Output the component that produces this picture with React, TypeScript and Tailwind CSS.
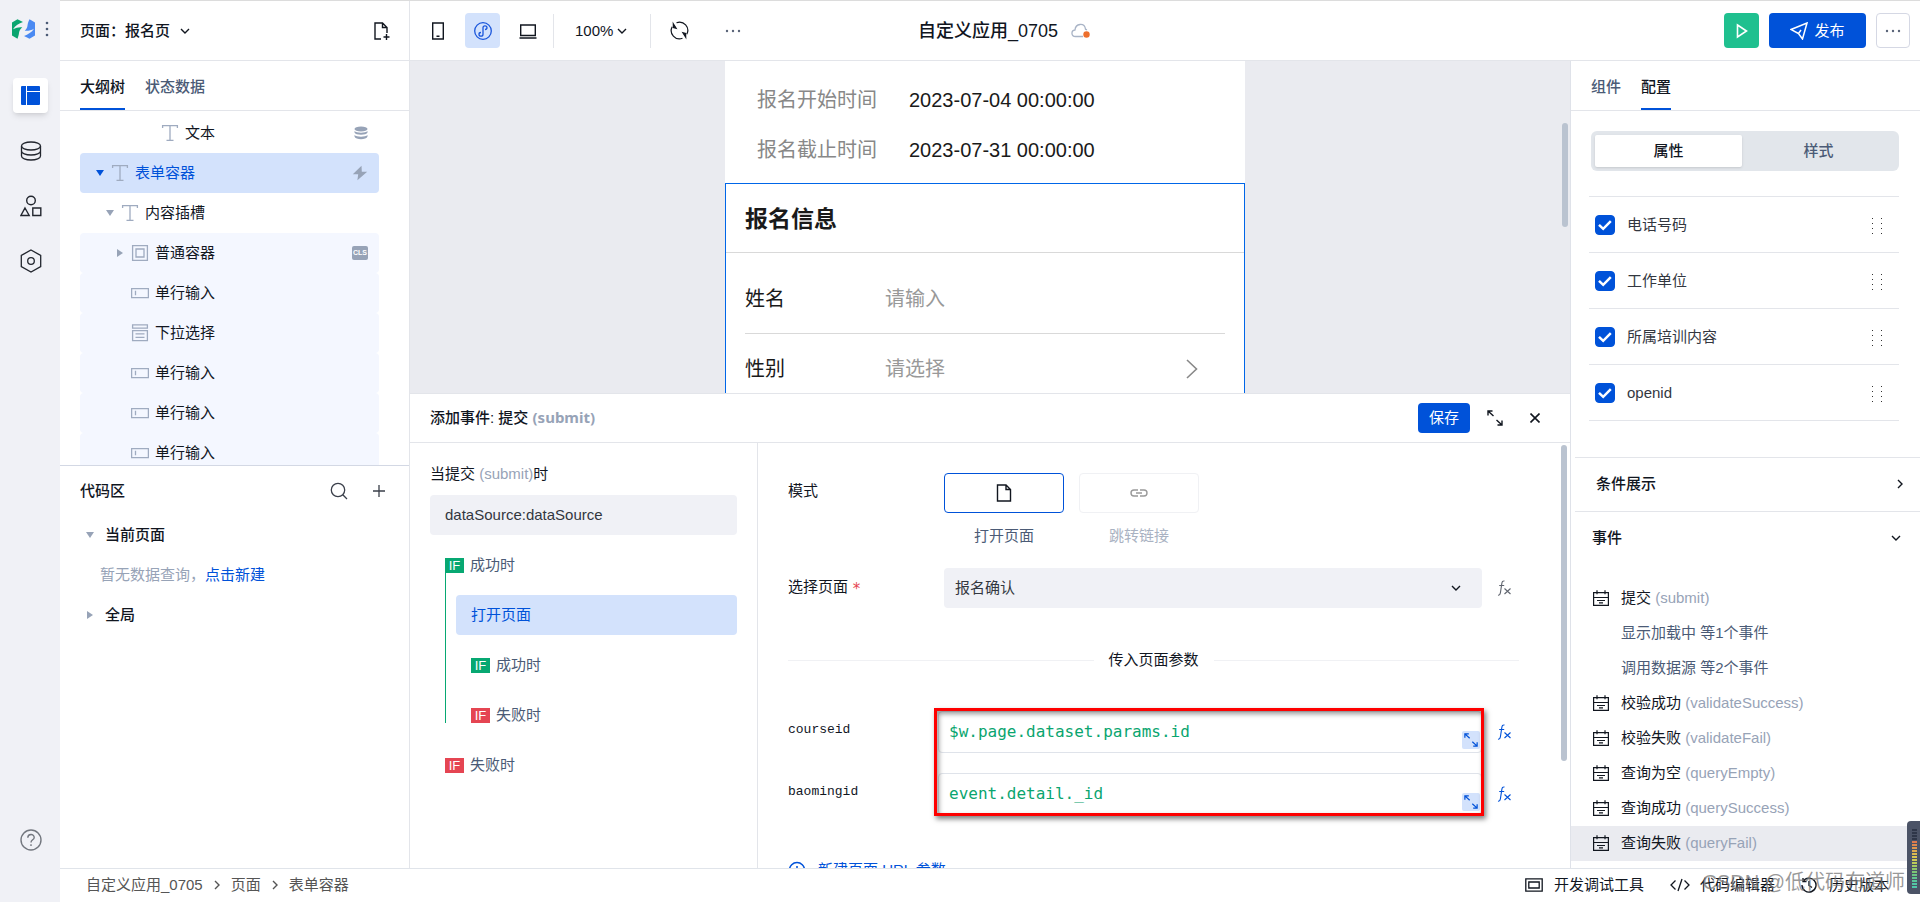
import React, { useState } from 'react'

interface TreeNode {
  label: string
  icon: 'text' | 'box' | 'input' | 'select'
  indent: string
  caret?: 'down' | 'right'
  state?: 'selected' | 'slot'
  badge?: 'data' | 'bolt' | 'cls'
}

const treeNodes: TreeNode[] = [
  { label: '文本', icon: 'text', indent: 'pl-[66px]', badge: 'data' },
  { label: '表单容器', icon: 'text', indent: 'pl-4', caret: 'down', state: 'selected', badge: 'bolt' },
  { label: '内容插槽', icon: 'text', indent: 'pl-[26px]', caret: 'down' },
  { label: '普通容器', icon: 'box', indent: 'pl-9', caret: 'right', state: 'slot', badge: 'cls' },
  { label: '单行输入', icon: 'input', indent: 'pl-9', state: 'slot' },
  { label: '下拉选择', icon: 'select', indent: 'pl-9', state: 'slot' },
  { label: '单行输入', icon: 'input', indent: 'pl-9', state: 'slot' },
  { label: '单行输入', icon: 'input', indent: 'pl-9', state: 'slot' },
  { label: '单行输入', icon: 'input', indent: 'pl-9', state: 'slot' },
]

const formFields = ['电话号码', '工作单位', '所属培训内容', 'openid']

const formEvents = [
  { name: '提交', code: 'submit', actions: ['显示加载中 等1个事件', '调用数据源 等2个事件'] },
  { name: '校验成功', code: 'validateSuccess', actions: [] },
  { name: '校验失败', code: 'validateFail', actions: [] },
  { name: '查询为空', code: 'queryEmpty', actions: [] },
  { name: '查询成功', code: 'querySuccess', actions: [] },
  { name: '查询失败', code: 'queryFail', actions: [], active: true },
]

const meterColors = [
  '#2e3648', '#2e3648', '#2e3648', '#2e3648', '#e07a4e', '#e0884e', '#e0984e', '#deab4f', '#dcbb50',
  '#dac652', '#cfcb55', '#bccb5a', '#a6ca61', '#8fc86a', '#7cc775', '#6bc682', '#60c68f', '#58c69b', '#53c6a4', '#50c6aa',
]

/* ---------- icons ---------- */

interface IconProps {
  w?: number
  h?: number
  stroke?: number
  className?: string
  children: React.ReactNode
}

const Icon: React.FC<IconProps> = ({ w = 18, h = 18, stroke = 1.3, className = '', children }) => (
  <svg width={w} height={h} viewBox={`0 0 ${w} ${h}`} fill="none" stroke="currentColor" strokeWidth={stroke} className={`shrink-0 ${className}`} aria-hidden="true">
    {children}
  </svg>
)

const ChevronDown: React.FC<{ className?: string }> = ({ className }) => (
  <Icon w={10} h={10} stroke={1.4} className={className}>
    <path d="M1 3l4 4 4-4" />
  </Icon>
)

const ChevronRight: React.FC<{ className?: string }> = ({ className }) => (
  <Icon w={10} h={10} stroke={1.4} className={className}>
    <path d="M3 1l4 4-4 4" />
  </Icon>
)

const Caret: React.FC<{ dir: 'down' | 'right'; className?: string }> = ({ dir, className }) => (
  <Icon w={8} h={8} stroke={0} className={className}>
    <path fill="currentColor" d={dir === 'down' ? 'M0 1h8L4 7z' : 'M1 0v8l6-4z'} />
  </Icon>
)

const Dots: React.FC = () => (
  <Icon w={18} h={4} stroke={0} className="text-[#5a6478]">
    <circle cx="2" cy="2" r="1.2" fill="currentColor" />
    <circle cx="8" cy="2" r="1.2" fill="currentColor" />
    <circle cx="14" cy="2" r="1.2" fill="currentColor" />
  </Icon>
)

const ExpandIcon: React.FC<{ w?: number }> = ({ w = 16 }) => (
  <svg width={w} height={w} viewBox="0 0 16 16" fill="none" stroke="currentColor" strokeWidth="1.4" className="shrink-0" aria-hidden="true">
    <path d="M1 5.500V1h4.500M1 1l5.500 5M15 10.500V15h-4.500M15 15l-5.500-5" />
  </svg>
)

const FxIcon: React.FC = () => (
  <Icon w={16} h={16} stroke={1.1}>
    <path d="M1 15.200c1.500.2 2.100-.6 2.400-2.400L4.800 3.600C5.100 1.600 5.800.7 7.500 1M2.200 5.500h5M7.500 8.500l6 5.500M13.500 8.500l-6 5.500" />
  </Icon>
)

const EventIcon: React.FC = () => (
  <Icon w={16} h={16} stroke={1.2}>
    <path d="M.6 2.600h14.800v12.800H.6zM.6 7.500h14.800M4 .3v4M12 .3v4M4 10.500h8M6 12.800h4" />
  </Icon>
)

const NodeIcon: React.FC<{ type: TreeNode['icon'] }> = ({ type }) => (
  <Icon w={18} h={18} stroke={1.3} className="text-[#9fabc0]">
    {type === 'text' && <path d="M1.600 4V1.600h14.800V4M9 1.600v14.800M5.500 16.400h7" />}
    {type === 'box' && <path d="M1.600 1.600h14.800v14.800H1.600zM5 5h8v8H5z" />}
    {type === 'input' && <path d="M.6 4.600h16.800v9H.6zM4.500 6.800v4.500" />}
    {type === 'select' && <path d="M1.600.8h14.800v3.400H1.600zM1.600 6.600h14.800v10H1.600zM4.500 9.800h9M4.500 13.300h9" />}
  </Icon>
)

const BadgeIcon: React.FC<{ type: TreeNode['badge'] }> = ({ type }) => {
  if (type === 'data') {
    return (
      <Icon w={14} h={14} stroke={0} className="text-[#97a3b7]">
        <g fill="currentColor">
          <ellipse cx="7" cy="3" rx="6.500" ry="2.600" />
          <path d="M.5 5c1.800 2.200 11.200 2.200 13 0v1.600c-1 3-12 3-13 0zM.5 9c1.800 2.200 11.200 2.200 13 0v1.600c-1 3.600-12 3.600-13 0z" />
        </g>
      </Icon>
    )
  }
  if (type === 'bolt') {
    return (
      <Icon w={16} h={16} stroke={0} className="text-[#97a3b7]">
        <path fill="currentColor" d="M9.500.8L.8 9.200h5.400L5.400 15.200 15.200 6.800H9.800z" />
      </Icon>
    )
  }
  return <span className="flex h-3.5 w-4 items-center justify-center rounded-xs bg-[#97a3b7] text-[7px] font-bold text-white">CLS</span>
}

const IfBadge: React.FC<{ ok?: boolean; text: string }> = ({ ok, text }) => (
  <div className="flex h-[15px] items-center gap-1.5 text-[#4b5b76]">
    <span className={`flex h-[15px] w-[19px] items-center justify-center text-[13px] text-white ${ok ? 'bg-[#07a872]' : 'bg-[#e54552]'}`}>IF</span>
    <span className="pb-0.5">{text}</span>
  </div>
)

/* ---------- page sections ---------- */

const Rail: React.FC = () => (
  <nav className="flex w-[60px] shrink-0 flex-col items-center bg-[#f0f1f6] pt-[19px] text-[#22262e]">
    <div className="flex items-center gap-2.5 self-stretch pl-3">
      <svg width="23" height="20" viewBox="0 0 23 20" aria-hidden="true">
        <path fill="#0aa56f" d="M0 3.500L5.500.3l5.500 2.800C7 4.600 3.200 6.800 1 10.300c3-1.700 6.200-2.400 9.300-2-1.800 1.500-3 3.500-3.300 5.700-.1 1.700-.8 4-1.500 5.700L0 16.500z" />
        <path fill="#4b8af2" d="M23 16.500l-5.500 3.200-5.500-2.800c4-1.500 7.800-3.700 10-7.200-3 1.700-6.200 2.400-9.300 2 1.800-1.500 2.600-3.200 2.800-5.200.3-2.200 1-4.500 2-6.200L23 3.500z" />
      </svg>
      <svg width="4" height="16" viewBox="0 0 4 16" fill="#4b5b76" aria-hidden="true">
        <circle cx="2" cy="2" r="1.300" /><circle cx="2" cy="8" r="1.300" /><circle cx="2" cy="14" r="1.300" />
      </svg>
    </div>
    <div className="mt-[39px] flex flex-col items-center gap-5 pl-px">
      <button aria-label="页面设计" className="flex size-[35px] items-center justify-center rounded bg-white shadow-md">
        <svg width="19" height="19" viewBox="0 0 19 19" fill="#0052d9" aria-hidden="true">
          <path d="M1 0h4v19H1a1 1 0 01-1-1V1a1 1 0 011-1zM6 0h12a1 1 0 011 1v4H6zM6 6h13v12a1 1 0 01-1 1H6z" />
        </svg>
      </button>
      <button aria-label="数据源" className="flex size-[35px] items-center justify-center">
        <Icon w={22} h={20}>
          <ellipse cx="11" cy="5" rx="9.500" ry="4" />
          <path d="M1.500 5v10c0 2.200 4.200 4 9.500 4s9.500-1.800 9.500-4V5M1.500 10c0 2.200 4.200 4 9.500 4s9.500-1.800 9.500-4" />
        </Icon>
      </button>
      <button aria-label="组件" className="flex size-[35px] items-center justify-center">
        <Icon w={22} h={22} stroke={1.4}>
          <circle cx="11" cy="5.500" r="4.300" />
          <path d="M5 13l4.200 7.500H.9zM12.800 13h8v7.500h-8z" />
        </Icon>
      </button>
      <button aria-label="设置" className="flex size-[35px] items-center justify-center">
        <Icon w={22} h={24}>
          <path d="M11 1l9.700 5.500v11L11 23l-9.700-5.500v-11z" />
          <circle cx="11" cy="12" r="3.300" />
        </Icon>
      </button>
    </div>
    <button aria-label="帮助" className="mt-auto mb-[51px] pl-px text-[#73777f]">
      <Icon w={22} h={22} stroke={1.4}>
        <circle cx="11" cy="11" r="10" />
        <path d="M7.800 8.800c0-4.300 6.400-4.300 6.400-.4 0 2.300-3.200 2.600-3.200 5.100M11 15.300v1.600" />
      </Icon>
    </button>
  </nav>
)

const Header: React.FC = () => (
  <header className="flex h-[61px] shrink-0 border-t border-b border-t-[#dcdcdc] border-b-[#e3e5ea]">
    <div className="flex w-[350px] shrink-0 items-center justify-between border-r border-[#e3e5ea] pr-[19px] pl-5">
      <button className="flex items-center gap-2.5 font-medium">
        页面：报名页
        <ChevronDown />
      </button>
      <button aria-label="新建页面">
        <Icon w={16} h={20} stroke={1.4}>
          <path d="M7 18H1V2h7.500L13 6.500V12M8.500 2v4.500H13M12.500 13v6M9.500 16h6" />
        </Icon>
      </button>
    </div>
    <div className="grid min-w-0 flex-1 grid-cols-[1fr_auto_1fr] items-center pr-1">
      <div className="flex items-center pl-2.5">
        <button aria-label="手机" className="flex size-[35px] items-center justify-center">
          <Icon stroke={1.400}>
            <path d="M3.700 1h10.600v16H3.700zM7.500 14.200h3" />
          </Icon>
        </button>
        <button aria-label="小程序" className="ml-2.5 flex size-[35px] items-center justify-center rounded bg-[#d3e2fc] text-[#1a56db]">
          <Icon>
            <circle cx="9" cy="9" r="8.300" />
            <path d="M9 12.200V5.800c0-2.600 4-2.600 4 0 0 1.200-1 1.700-2 1.700M9 12.200c0 2.600-4 2.600-4 0 0-1.200 1-1.700 2-1.700" />
          </Icon>
        </button>
        <button aria-label="电脑" className="ml-2.5 flex size-[35px] items-center justify-center">
          <Icon stroke={1.400}>
            <path d="M1.700 3h14.600v10.500H1.700zM.5 16h17" />
          </Icon>
        </button>
        <span className="ml-2 h-[34px] w-px bg-[#e3e5ea]" />
        <button className="ml-[21px] flex items-center gap-1">
          100%
          <ChevronDown />
        </button>
        <span className="ml-[23px] h-[34px] w-px bg-[#e3e5ea]" />
        <button aria-label="刷新" className="ml-[19px]">
          <Icon w={19} h={19} stroke={1.2}>
            <path d="M6.500 1.700a8.300 8.300 0 0110.300 11.600M12.500 17.300A8.300 8.300 0 012.200 5.700" />
            <path d="M3.300 2.800l2.800 4.500-2.700-.8zM15.700 16.200l-2.800-4.500 2.700.8z" fill="currentColor" />
          </Icon>
        </button>
        <button aria-label="更多操作" className="ml-9"><Dots /></button>
      </div>
      <h1 className="text-lg font-medium">自定义应用_0705</h1>
      <div className="flex items-center justify-between pl-[13px]">
        <Icon w={20} h={16} className="text-[#a9b4c6]">
          <path d="M12 13.500H4.500C0 13.500-.3 7.500 4 7 4.500.3 13.500-.7 14.500 6.200l1.500.6" />
          <circle cx="15.500" cy="11.500" r="3.200" fill="#ed6f2d" stroke="none" />
        </Icon>
      </div>
    </div>
    <div className="flex w-[350px] shrink-0 items-center justify-end gap-2.5 pr-2.5">
      <button aria-label="预览" className="flex size-[35px] items-center justify-center rounded bg-[#1fc08f] text-white">
        <Icon w={12} h={16} stroke={1.600}>
          <path d="M1.500 2l9 6-9 6z" />
        </Icon>
      </button>
      <button className="flex h-[35px] w-[97px] items-center justify-center gap-1.5 rounded bg-[#0052d9] text-white">
        <Icon stroke={1.500}>
          <path d="M1 7.500L17 1l-4.500 16-4-5.500zM8.500 11.500l2.500-3.500M5 9.600l3.500 1.900" />
        </Icon>
        发布
      </button>
      <button aria-label="更多" className="flex h-[35px] w-[34px] items-center justify-center rounded border border-[#d5d8e4] pl-0.5"><Dots /></button>
    </div>
  </header>
)

const tabClass = (active: boolean) =>
  active
    ? 'flex h-full items-center border-b-2 border-[#0052d9] pt-1 font-medium text-[#11161f]'
    : 'flex h-full items-center border-b-2 border-transparent pt-1 font-medium text-[#4b5b76]'

const OutlinePanel: React.FC = () => (
  <aside className="flex w-[350px] shrink-0 flex-col border-r border-[#e3e5ea]">
    <div className="flex h-[50px] shrink-0 gap-5 border-b border-[#e3e5ea] px-5">
      <button className={tabClass(true)}>大纲树</button>
      <button className={tabClass(false)}>状态数据</button>
    </div>
    <ul className="min-h-0 flex-1 overflow-hidden pt-0.5 pr-[30px] pl-5">
      {treeNodes.map((node, i) => (
        <li
          key={i}
          className={`flex h-10 items-center rounded pr-[11px] ${node.indent} ${
            node.state === 'selected' ? 'bg-[#d3e2fc] text-[#0052d9]' : node.state === 'slot' ? 'bg-[#f4f7ff]' : ''
          }`}
        >
          <span className={`w-[15px] ${node.state === 'selected' ? 'text-[#0052d9]' : 'text-[#97a3b7]'}`}>
            {node.caret && <Caret dir={node.caret} />}
          </span>
          <NodeIcon type={node.icon} />
          <span className="ml-1.5">{node.label}</span>
          {node.badge && <span className="ml-auto"><BadgeIcon type={node.badge} /></span>}
        </li>
      ))}
    </ul>
    <section className="h-[403px] shrink-0 border-t border-[#d3d8e4] pl-5">
      <div className="flex h-[49px] items-center pr-6">
        <h2 className="font-medium">代码区</h2>
        <button aria-label="搜索" className="ml-auto text-[#3a3f4a]">
          <Icon>
            <circle cx="8" cy="8" r="6.700" />
            <path d="M12.800 12.800L17 17" />
          </Icon>
        </button>
        <button aria-label="新增" className="ml-[25px] text-[#3a3f4a]">
          <Icon w={12} h={12}>
            <path d="M6 0v12M0 6h12" />
          </Icon>
        </button>
      </div>
      <button className="flex h-10 items-center gap-[11px] pl-1.5 font-medium">
        <Caret dir="down" className="text-[#97a3b7]" />
        当前页面
      </button>
      <p className="flex h-10 items-center pl-5 text-[#97a3b7]">
        暂无数据查询，<a href="#new" className="text-[#0052d9]">点击新建</a>
      </p>
      <button className="flex h-10 items-center gap-[11px] pl-1.5 font-medium">
        <Caret dir="right" className="text-[#97a3b7]" />
        全局
      </button>
    </section>
  </aside>
)

const Canvas: React.FC = () => (
  <div className="flex min-h-0 flex-1 overflow-hidden bg-[#eaebf0]">
    <div className="flex min-w-0 flex-1 justify-center">
      <div className="w-[520px] bg-white text-xl text-[#1a1a1a]">
        <dl className="h-[122px] pt-3.5 pl-8">
          <div className="flex h-[50px] items-center">
            <dt className="w-[152px] text-[#888]">报名开始时间</dt>
            <dd>2023-07-04 00:00:00</dd>
          </div>
          <div className="flex h-[50px] items-center">
            <dt className="w-[152px] text-[#888]">报名截止时间</dt>
            <dd>2023-07-31 00:00:00</dd>
          </div>
        </dl>
        <form className="h-[400px] border border-[#0066e8]">
          <h2 className="flex h-[69px] items-center border-b border-[#d9d9d9] pt-0.5 pl-[19px] text-[23px] font-bold">报名信息</h2>
          <div className="mx-[19px] flex h-[81px] items-center border-b border-[#d9d9d9] pt-3">
            <label htmlFor="name" className="w-[140px]">姓名</label>
            <input id="name" placeholder="请输入" className="min-w-0 flex-1 placeholder:text-[#999]" />
          </div>
          <div className="mx-[19px] flex h-[70px] items-center pr-[27px]">
            <label htmlFor="gender" className="w-[140px]">性别</label>
            <select id="gender" className="min-w-0 flex-1 appearance-none text-[#999]">
              <option>请选择</option>
            </select>
            <Icon w={12} h={20} stroke={1.600} className="text-[#888]">
              <path d="M1 1l9.500 9L1 19" />
            </Icon>
          </div>
        </form>
      </div>
    </div>
    <div className="w-2.5 shrink-0 pt-[62px] pl-0.5">
      <div className="h-[104px] w-1.5 rounded-full bg-[#bac3d0]" />
    </div>
  </div>
)

const EventFlow: React.FC = () => (
  <div className="w-[348px] shrink-0 border-r border-[#e3e5ea] px-5 pt-[19px]">
    <p className="flex h-6 items-center">当提交&nbsp;<span className="text-[#97a3b7]">(submit)</span>时</p>
    <div className="mt-[9px] flex h-10 items-center rounded bg-[#f0f1f6] pl-[15px] text-[#33373f]">dataSource:dataSource</div>
    <div className="mt-[23px] ml-[15px] flex">
      <span className="w-px bg-[#07a872]" />
      <div className="-ml-px flex-1">
        <IfBadge ok text="成功时" />
        <button className="mt-[22px] ml-[11px] flex h-10 w-[281px] items-center rounded bg-[#d3e2fc] pl-[15px] text-[#0052d9]">打开页面</button>
        <div className="mt-[23px] flex flex-col gap-[35px] pl-[26px]">
          <IfBadge ok text="成功时" />
          <IfBadge text="失败时" />
        </div>
      </div>
    </div>
    <div className="mt-[35px] ml-[15px]">
      <IfBadge text="失败时" />
    </div>
  </div>
)

const ParamRow: React.FC<{ name: string; value: string }> = ({ name, value }) => {
  const [expr, setExpr] = useState(value)
  return (
    <div className="flex h-[42px]">
      <label htmlFor={name} className="flex h-[37px] w-[150px] shrink-0 items-center font-['Liberation_Mono',monospace] text-[13px]">{name}</label>
      <div className="flex min-w-0 flex-1 rounded border border-[#dfe3ea]">
        <input
          id={name}
          value={expr}
          onChange={(e) => setExpr(e.target.value)}
          className="min-w-0 flex-1 pl-2.5 font-['DejaVu_Sans_Mono',monospace] text-base text-[#0aa56f]"
        />
        <button aria-label="展开编辑" className="mr-px mb-[3px] flex size-[18px] items-center justify-center self-end rounded-xs bg-[#d3e2fc] text-[#0052d9]">
          <ExpandIcon w={14} />
        </button>
      </div>
      <button aria-label={`${name} 表达式`} className="ml-[15px] flex w-[22px] items-center text-[#0052d9]"><FxIcon /></button>
    </div>
  )
}

const EventForm: React.FC = () => (
  <div className="flex min-w-0 flex-1">
    <div className="min-w-0 flex-1 overflow-hidden pt-[30px] pl-[30px]">
      <div className="flex">
        <span className="flex h-[35px] w-[156px] shrink-0 items-center">模式</span>
        <div className="flex gap-[15px]">
          <div className="w-[120px] text-center">
            <button aria-label="打开页面" className="flex h-10 w-full items-center justify-center rounded border border-[#0052d9]">
              <Icon w={16} h={18} stroke={1.400}>
                <path d="M1.500 1H10l4.500 4.500V17h-13zM10 1v4.500h4.500" />
              </Icon>
            </button>
            <p className="mt-[11px] leading-6 text-[#4b5b76]">打开页面</p>
          </div>
          <div className="w-[120px] text-center">
            <button aria-label="跳转链接" disabled className="flex h-10 w-full items-center justify-center rounded border border-[#f0f1f4] text-[#999]">
              <Icon w={18} h={8} stroke={1.400}>
                <path d="M8 1H4a3 3 0 000 6h4M10 1h4a3 3 0 010 6h-4M6 4h6" />
              </Icon>
            </button>
            <p className="mt-[11px] leading-6 text-[#a9b2c2]">跳转链接</p>
          </div>
        </div>
      </div>
      <div className="mt-5 flex h-10">
        <label htmlFor="page" className="flex h-[37px] w-[156px] shrink-0 items-center gap-1">
          选择页面<span className="pt-1 font-['DejaVu_Sans_Mono',monospace] text-[#e54552]">*</span>
        </label>
        <div className="flex min-w-0 flex-1 items-center rounded bg-[#f0f1f6] pr-[21px]">
          <select id="page" className="h-full min-w-0 flex-1 appearance-none pl-[11px] text-[#33373f]">
            <option>报名确认</option>
          </select>
          <ChevronDown />
        </div>
        <button aria-label="表达式" className="ml-[15px] flex w-[22px] items-center text-[#5f646e]"><FxIcon /></button>
      </div>
      <div className="mt-10 flex h-6 items-center gap-[15px]">
        <span className="h-px flex-1 bg-[#f0f1f4]" />
        传入页面参数
        <span className="h-px flex-1 bg-[#f0f1f4]" />
      </div>
      <div className="relative mt-[39px] flex flex-col gap-5">
        <ParamRow name="courseid" value="$w.page.dataset.params.id" />
        <ParamRow name="baomingid" value="event.detail._id" />
        {/* red highlight around both expressions */}
        <div className="pointer-events-none absolute -top-[3px] right-[35px] -bottom-px left-[146px] border-[3px] border-[#fe0000] shadow-[2px_3px_5px_rgba(0,0,0,0.5),inset_2px_3px_5px_rgba(0,0,0,0.4)]" />
      </div>
      <button className="mt-[43px] flex h-6 items-center gap-3 text-[#0052d9]">
        <Icon stroke={1.500}>
          <circle cx="9" cy="9" r="7.500" />
          <path d="M9 5v8M5 9h8" />
        </Icon>
        新建页面 URL 参数
      </button>
    </div>
    <div className="w-[51px] shrink-0 pt-0.5 pl-[42px]">
      <div className="h-[316px] w-1.5 rounded-full bg-[#bac3d0]" />
    </div>
  </div>
)

const EventPanel: React.FC = () => (
  <section className="flex h-[475px] shrink-0 flex-col border-t border-[#e3e5ea] bg-white">
    <div className="flex h-[49px] shrink-0 items-center border-b border-[#e3e5ea] pr-[30px] pl-5">
      <h2 className="pb-0.5 font-medium">
        添加事件: 提交 <span className="font-['Noto_Sans',sans-serif] font-bold text-[#97a3b7]">(submit)</span>
      </h2>
      <button className="ml-auto h-[30px] w-[52px] rounded bg-[#0052d9] text-white">保存</button>
      <button aria-label="全屏" className="ml-[17px]"><ExpandIcon /></button>
      <button aria-label="关闭" className="ml-[27px]">
        <Icon w={10} h={10} stroke={1.600}>
          <path d="M.5.5l9 9M9.500.5l-9 9" />
        </Icon>
      </button>
    </div>
    <div className="flex min-h-0 flex-1">
      <EventFlow />
      <EventForm />
    </div>
  </section>
)

const FieldRow: React.FC<{ name: string }> = ({ name }) => {
  const [checked, setChecked] = useState(true)
  return (
    <li className="flex h-14 items-center border-b border-[#e3e5ea] pr-4 pl-1.5">
      <label className="flex items-center gap-3 text-[#33373f]">
        <span className="grid">
          <input
            type="checkbox"
            checked={checked}
            onChange={() => setChecked(!checked)}
            className="col-start-1 row-start-1 size-5 appearance-none rounded border border-[#0052d9] checked:bg-[#0052d9]"
          />
          <svg width="20" height="20" viewBox="0 0 20 20" fill="none" stroke="#fff" strokeWidth="2.500" className="pointer-events-none col-start-1 row-start-1" aria-hidden="true">
            <path d="M4 9.800l4.200 4L15.800 6.200" />
          </svg>
        </span>
        {name}
      </label>
      <svg width="12" height="18" viewBox="0 0 12 18" fill="#333" className="ml-auto" aria-hidden="true">
        {[2, 7, 12, 17].map((y) => (
          <g key={y}>
            <rect x="1" y={y} width="1" height="1" />
            <rect x="10" y={y} width="1" height="1" />
          </g>
        ))}
      </svg>
    </li>
  )
}

const ConfigPanel: React.FC = () => (
  <aside className="flex w-[350px] shrink-0 flex-col overflow-hidden border-l border-[#dfe2e9]">
    <div className="flex h-[50px] shrink-0 gap-5 border-b border-[#e3e5ea] px-5">
      <button className={tabClass(false)}>组件</button>
      <button className={tabClass(true)}>配置</button>
    </div>
    <div className="mt-5 mr-[21px] ml-5 flex h-10 shrink-0 rounded-md bg-[#e2e6eb] p-1 font-medium">
      <button className="w-[147px] rounded-xs bg-white shadow-sm">属性</button>
      <button className="flex-1 text-[#4b5b76]">样式</button>
    </div>
    <ul className="mt-[25px] mr-[21px] ml-[18px] shrink-0 border-t border-[#e3e5ea]">
      {formFields.map((name) => <FieldRow key={name} name={name} />)}
    </ul>
    <button className="mt-9 ml-1 flex h-[55px] shrink-0 items-center justify-between border-t border-b border-[#e3e5ea] pr-[15px] pb-0.5 pl-[21px] font-medium">
      条件展示
      <ChevronRight />
    </button>
    <button className="flex h-[54px] shrink-0 items-center justify-between pr-[19px] pb-0.5 pl-[21px] font-medium">
      事件
      <ChevronDown />
    </button>
    <ul className="mt-[15px]">
      {formEvents.map((ev) => (
        <li key={ev.code} className={ev.active ? 'bg-[#eaebf0]' : ''}>
          <div className="flex h-[35px] items-center pb-0.5 pl-[22px]">
            <EventIcon />
            <span className="ml-3">{ev.name} <span className="text-[#97a3b7]">({ev.code})</span></span>
          </div>
          {ev.actions.map((action) => (
            <div key={action} className="flex h-[35px] items-center pb-0.5 pl-[50px] text-[#4b5b76]">{action}</div>
          ))}
        </li>
      ))}
    </ul>
  </aside>
)

const StatusBar: React.FC = () => (
  <footer className="flex h-[34px] shrink-0 items-center border-t border-[#e0e4ea] pr-[31px] pb-0.5 pl-[26px]">
    <div className="flex items-center text-[#555]">
      <a href="#app">自定义应用_0705</a>
      <ChevronRight className="mx-[9px]" />
      <a href="#page">页面</a>
      <ChevronRight className="mx-[9px]" />
      <a href="#form">表单容器</a>
    </div>
    <div className="ml-auto flex items-center gap-[26px]">
      <button className="flex items-center gap-[11px]">
        <Icon w={18} h={14} stroke={1.300}>
          <path d="M.8.8h16.400v12.400H.8zM3.800 4h10.400v6H3.800z" />
        </Icon>
        开发调试工具
      </button>
      <button className="flex items-center gap-2.5">
        <Icon w={20} h={14} stroke={1.300}>
          <path d="M5.500 2.500L1 7l4.500 4.500M14.500 2.500L19 7l-4.500 4.500M12 1L8 13" />
        </Icon>
        代码编辑器
      </button>
      <button className="flex items-center gap-3">
        <Icon w={16} h={16} stroke={1.400}>
          <path d="M2 4.500A7 7 0 111 8M2 1v3.500h3.500M8 4v4.500l3 2" />
        </Icon>
        历史版本
      </button>
    </div>
  </footer>
)

const App: React.FC = () => {
  return (
    <div className="relative flex h-screen overflow-hidden bg-white font-['Liberation_Sans','Noto_Sans_CJK_SC',sans-serif] text-[15px] leading-6 text-[#11161f]">
      <Rail />
      <div className="flex min-w-0 flex-1 flex-col">
        <Header />
        <div className="flex min-h-0 flex-1">
          <OutlinePanel />
          <main className="flex min-w-0 flex-1 flex-col">
            <Canvas />
            <EventPanel />
          </main>
          <ConfigPanel />
        </div>
        <StatusBar />
      </div>

      <span className="pointer-events-none absolute right-[15px] bottom-1.5 text-xl text-[#777]/75">CSDN @低代码布道师</span>

      {/* level meter docked to the right edge */}
      <div className="absolute right-0 bottom-2 flex h-[73px] w-[13px] flex-col items-end gap-px rounded-l bg-[#4b5366] pt-2 pr-[3px]">
        {meterColors.map((color, i) => (
          <span key={i} className="h-0.5 w-[5px]" style={{ backgroundColor: color }} />
        ))}
      </div>
    </div>
  )
}

export default App
